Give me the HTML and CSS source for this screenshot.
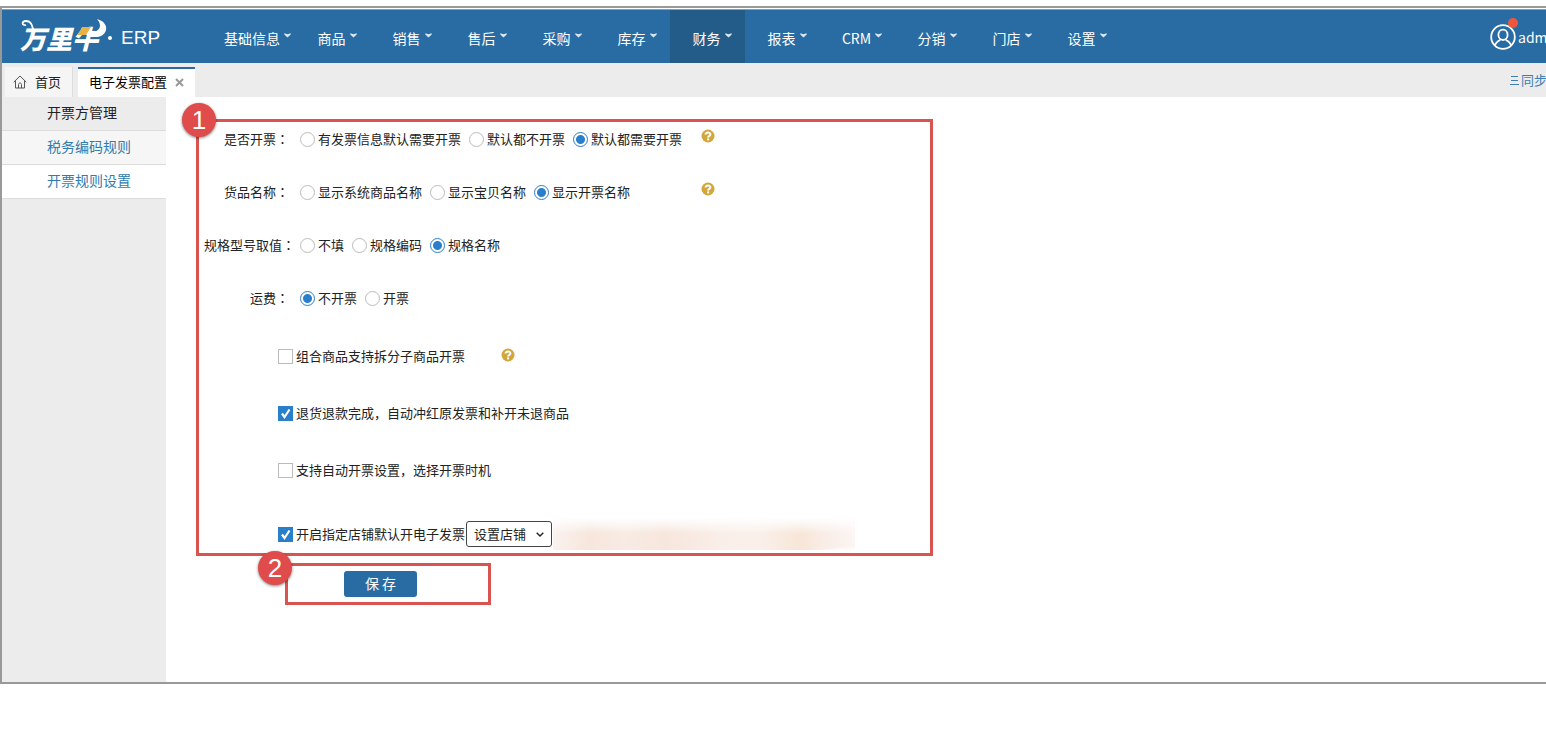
FILE: index.html
```html
<!DOCTYPE html>
<html lang="zh-CN">

<head>
    <meta charset="UTF-8">
    <meta name="viewport" content="width=device-width, initial-scale=1.0">
    <title>电子发票配置</title>
    <link rel="stylesheet" href="styles.css">
</head>

<body>
    <svg class="defs" width="0" height="0" aria-hidden="true">
        <symbol id="help" viewBox="0 0 14 14">
            <circle cx="7" cy="7" r="6.5" fill="#d3a63c" />
            <path d="M4.6 5.6C4.6 2.8 9.5 2.9 9.4 5.5C9.3 7 7.1 6.9 7.1 8.6" fill="none" stroke="#fff" stroke-width="2" />
            <rect x="6.1" y="9.4" width="2" height="2" fill="#fff" />
        </symbol>
        <symbol id="caret" viewBox="0 0 7 5">
            <path d="M0.3 0.3L3.5 1.2L6.7 0.3V1.4L3.5 4.6L0.3 1.4Z" fill="#d9e8f3" />
        </symbol>
    </svg>

    <div class="frame">
        <header class="header">
            <div class="logo">
                <span class="logo-name">万里牛</span>
                <svg class="logo-horns" width="90" height="32" viewBox="0 0 90 32" aria-hidden="true">
                    <path d="M13 10C12 6 11 2 6 2C1 2 2 7 6 6" fill="none" stroke="#fff" stroke-width="1.8" />
                    <path d="M57 16L63 8H71L66 16Z" fill="#e9b342" />
                    <path d="M69 14C80 13 83 7 77 0C88 3 89 13 81 17C78 18.5 73 18 69 18Z" fill="#fff" />
                </svg>
                <span class="logo-dot"></span>
                <span class="logo-erp">ERP</span>
            </div>
            <nav class="nav">
                <a class="nav-wide" href="#">基础信息<svg><use href="#caret" /></svg></a>
                <a href="#">商品<svg><use href="#caret" /></svg></a>
                <a href="#">销售<svg><use href="#caret" /></svg></a>
                <a href="#">售后<svg><use href="#caret" /></svg></a>
                <a href="#">采购<svg><use href="#caret" /></svg></a>
                <a href="#">库存<svg><use href="#caret" /></svg></a>
                <a class="active" href="#">财务<svg><use href="#caret" /></svg></a>
                <a href="#">报表<svg><use href="#caret" /></svg></a>
                <a href="#">CRM<svg><use href="#caret" /></svg></a>
                <a href="#">分销<svg><use href="#caret" /></svg></a>
                <a href="#">门店<svg><use href="#caret" /></svg></a>
                <a href="#">设置<svg><use href="#caret" /></svg></a>
            </nav>
            <a class="user" href="#">
                <svg width="26" height="26" viewBox="0 0 26 26" fill="none" stroke="#fff" stroke-width="1.8" aria-hidden="true">
                    <circle cx="13" cy="13" r="11.8" />
                    <ellipse cx="13" cy="10.8" rx="4.6" ry="5.2" />
                    <path d="M5 21C6 18 8 17.6 10.3 15.6M21 21C20 18 18 17.6 15.7 15.6" />
                </svg>
                <span class="user-dot"></span>
                <span>adm</span>
            </a>
        </header>

        <div class="tabs">
            <a class="tab" href="#">
                <svg width="14" height="14" viewBox="0 0 14 14" fill="none" stroke="#555" aria-hidden="true">
                    <path d="M0.7 7.2L7 1L13.3 7.2M2.5 6V13H11.5V6M5.5 13V9.5C5.5 7.5 8.5 7.5 8.5 9.5V13" />
                </svg>
                首页
            </a>
            <div class="tab active">
                电子发票配置
                <button class="close" type="button" aria-label="关闭">
                    <svg width="9" height="9" viewBox="0 0 9 9" stroke="#999" stroke-width="2"><path d="M1 1L8 8M8 1L1 8" /></svg>
                </button>
            </div>
            <a class="sync" href="#">
                <svg width="9" height="11" viewBox="0 0 9 11" stroke="#3c7eb0" aria-hidden="true"><path d="M1 1.5H8M1 5.5H8M0 9.5H9" /></svg>
                同步
            </a>
        </div>

        <div class="body">
            <aside class="sidebar">
                <a class="current" href="#">开票方管理</a>
                <a href="#">税务编码规则</a>
                <a class="open" href="#">开票规则设置</a>
            </aside>

            <main class="content">
                <form>
                    <div class="settings">
                        <span class="badge">1</span>

                        <div class="row" role="group" aria-labelledby="l1">
                            <span class="label" id="l1">是否开票<span class="colon" lang="zh-TW">：</span></span>
                            <div class="options">
                                <label><input type="radio" name="need">有发票信息默认需要开票</label>
                                <label><input type="radio" name="need">默认都不开票</label>
                                <label><input type="radio" name="need" checked>默认都需要开票</label>
                            </div>
                            <svg class="help"><use href="#help" /></svg>
                        </div>
                        <div class="row" role="group" aria-labelledby="l2">
                            <span class="label" id="l2">货品名称<span class="colon" lang="zh-TW">：</span></span>
                            <div class="options">
                                <label><input type="radio" name="goods">显示系统商品名称</label>
                                <label><input type="radio" name="goods">显示宝贝名称</label>
                                <label><input type="radio" name="goods" checked>显示开票名称</label>
                            </div>
                            <svg class="help"><use href="#help" /></svg>
                        </div>
                        <div class="row" role="group" aria-labelledby="l3">
                            <span class="label" id="l3">规格型号取值<span class="colon" lang="zh-TW">：</span></span>
                            <div class="options">
                                <label><input type="radio" name="spec">不填</label>
                                <label><input type="radio" name="spec">规格编码</label>
                                <label><input type="radio" name="spec" checked>规格名称</label>
                            </div>
                        </div>
                        <div class="row" role="group" aria-labelledby="l4">
                            <span class="label" id="l4">运费<span class="colon" lang="zh-TW">：</span></span>
                            <div class="options">
                                <label><input type="radio" name="freight" checked>不开票</label>
                                <label><input type="radio" name="freight">开票</label>
                            </div>
                        </div>

                        <div class="checks">
                            <div class="check">
                                <label><input type="checkbox">组合商品支持拆分子商品开票</label>
                                <svg class="help"><use href="#help" /></svg>
                            </div>
                            <div class="check">
                                <label><input type="checkbox" checked>退货退款完成，自动冲红原发票和补开未退商品</label>
                            </div>
                            <div class="check">
                                <label><input type="checkbox">支持自动开票设置，选择开票时机</label>
                            </div>
                            <div class="check shop">
                                <label><input type="checkbox" checked>开启指定店铺默认开电子发票</label>
                                <select aria-label="设置店铺">
                                    <option>设置店铺</option>
                                </select>
                                <span class="masked"></span>
                            </div>
                        </div>
                    </div>

                    <div class="save">
                        <span class="badge">2</span>
                        <button type="submit">保 存</button>
                    </div>
                </form>
            </main>
        </div>
    </div>
</body>

</html>
```
FILE: styles.css
```css
* {
    box-sizing: border-box;
}

body {
    margin: 0;
    padding-top: 6px;
    background-color: #fff;
    color: #222;
    font-family: "Noto Sans CJK SC", sans-serif;
    font-size: 13px;
    line-height: 20px;
    overflow-x: hidden;
}

a {
    color: inherit;
    text-decoration: none;
}

.defs {
    position: absolute;
}

.frame {
    border: 2px solid #999;
    border-right: none;
    padding-top: 1px;
}

/* top bar */
.header {
    display: flex;
    height: 54px;
    border-top: 1px solid #8b9dab;
    background-color: #286ca3;
    color: #fff;
}

.logo {
    position: relative;
    display: flex;
    align-items: center;
    width: 200px;
    padding: 2px 0 0 18px;
}

.logo-name {
    font-size: 26px;
    font-weight: 900;
    font-style: italic;
}

.logo-horns {
    position: absolute;
    left: 18px;
    top: 9px;
}

.logo-dot {
    width: 4px;
    height: 4px;
    margin: 0 9px 0 10px;
    border-radius: 50%;
    background-color: #fff;
}

.logo-erp {
    font-family: "Liberation Sans", sans-serif;
    font-size: 19px;
}

.nav {
    display: flex;
    flex: 1;
    font-size: 14px;
}

.nav a {
    display: flex;
    align-items: center;
    justify-content: center;
    gap: 4px;
    width: 75px;
    padding: 2px 0 0 9px;
}

.nav .nav-wide {
    width: 93px;
    padding: 2px 4px 0 22px;
}

.nav .active {
    background-color: #245c89;
}

.nav svg {
    width: 7px;
    height: 5px;
    margin-bottom: 4px;
}

.user {
    position: relative;
    display: flex;
    align-items: center;
    gap: 2px;
    width: 56px;
    font-size: 14px;
}

.user svg {
    flex: none;
}

.user-dot {
    position: absolute;
    left: 18px;
    top: 8px;
    width: 10px;
    height: 10px;
    border-radius: 50%;
    background-color: #f0563d;
}

/* tabs */
.tabs {
    display: flex;
    align-items: flex-end;
    height: 34px;
    padding-left: 3px;
    background-color: #ececec;
}

.tab {
    display: flex;
    align-items: center;
    gap: 8px;
    height: 30px;
    margin-right: 5px;
    padding: 0 11px 0 8px;
    border-right: 1px solid #ddd;
    background-color: #f5f5f5;
}

.tab.active {
    padding: 0 11px 2px;
    border-top: 2px solid #286ca3;
    border-right: none;
    background-color: #fff;
    color: #000;
}

.close {
    display: flex;
    padding: 0;
    border: none;
    background: none;
}

.sync {
    display: flex;
    align-items: center;
    gap: 2px;
    width: 36px;
    height: 34px;
    margin-left: auto;
    color: #3c7eb0;
    white-space: nowrap;
    overflow: hidden;
}

.sync svg {
    flex: none;
}

/* page body */
.body {
    display: flex;
}

.sidebar {
    width: 164px;
    background-color: #ececec;
    color: #2f7cae;
    font-size: 14px;
}

.sidebar a {
    display: block;
    padding: 5px 0 8px 45px;
    border-bottom: 1px solid #dcdcdc;
    background-color: #f6f6f6;
}

.sidebar .current {
    background-color: #ececec;
    color: #222;
}

.sidebar .open {
    background-color: #fff;
}

.content {
    flex: 1;
    padding: 22px 30px 77px;
}

.settings {
    position: relative;
    max-width: 737px;
    padding: 7px 0 3px;
    border: 3px solid #d9534f;
}

.row {
    display: flex;
    margin-bottom: 33px;
    padding-left: 5px;
}

.label {
    width: 85px;
    margin-right: 11px;
    text-align: right;
    white-space: nowrap;
}

.colon {
    font-family: "Noto Sans CJK TC", sans-serif;
}

.options {
    display: flex;
    gap: 8px;
    width: 401px;
    white-space: nowrap;
}

label {
    display: flex;
    align-items: center;
    gap: 3px;
}

input {
    appearance: none;
    width: 15px;
    height: 15px;
    margin: 0;
    border: 1px solid #bbb;
    background-color: #fff;
}

input[type="radio"] {
    border-radius: 50%;
}

input[type="radio"]:checked {
    border-color: #2a7fca;
    background: radial-gradient(circle, #2a7fca 4px, #fff 5px);
}

input[type="checkbox"]:checked {
    border-color: #2a7fca;
    background: #2a7fca url("data:image/svg+xml,%3Csvg xmlns='http://www.w3.org/2000/svg' viewBox='0 0 13 13'%3E%3Cpath d='M3 6.5L5.5 10L10.5 2.5' fill='none' stroke='white' stroke-width='2.2'/%3E%3C/svg%3E");
}

.help {
    width: 14px;
    height: 14px;
}

.checks {
    display: flex;
    flex-direction: column;
    gap: 37px;
    padding: 5px 0 0 79px;
}

.check {
    display: flex;
}

.check .help {
    margin: 2px 0 0 36px;
}

.shop {
    align-items: center;
    padding-top: 1px;
}

select {
    appearance: none;
    width: 86px;
    height: 26px;
    margin-left: 1px;
    padding: 0 7px 2px;
    border: 1px solid #444;
    border-radius: 3px;
    background: #fff url("data:image/svg+xml,%3Csvg xmlns='http://www.w3.org/2000/svg' width='8' height='5' viewBox='0 0 8 5'%3E%3Cpath d='M0.7 0.7L4 4L7.3 0.7' fill='none' stroke='%23222' stroke-width='1.4'/%3E%3C/svg%3E") no-repeat right 7px center;
    color: #222;
    font-family: inherit;
    font-size: 13px;
}

/* blurred shop names */
.masked {
    width: 302px;
    height: 32px;
    margin-left: 1px;
    background:
        linear-gradient(to bottom, #fff, transparent 50%),
        linear-gradient(to bottom right, transparent 92%, #fff),
        linear-gradient(to right, #faf2ee, #f7e6dc 12%, #f8ebe3 24%, #f7e6dc 37%, #f9eee8 55%, #faf0ea 68%, #f7e6d8 82%, #f9efea 92%, #fcf5f3);
}

.save {
    position: relative;
    width: fit-content;
    margin: 7px 0 0 89px;
    padding: 5px 71px 5px 56px;
    border: 3px solid #d9534f;
}

.save button {
    display: block;
    width: 73px;
    height: 26px;
    padding: 0 0 3px;
    border: none;
    border-radius: 3px;
    background-color: #286ca3;
    color: #fff;
    font-family: inherit;
    font-size: 14px;
}

.badge {
    position: absolute;
    left: -17px;
    top: -19px;
    width: 34px;
    height: 34px;
    border-radius: 50%;
    background-color: #e04b4b;
    box-shadow: 0 1px 3px rgba(0, 0, 0, 0.5);
    color: #fff;
    font-family: "Liberation Sans", sans-serif;
    font-size: 26px;
    line-height: 34px;
    text-align: center;
}

.save .badge {
    left: -30px;
    top: -15px;
}
```
